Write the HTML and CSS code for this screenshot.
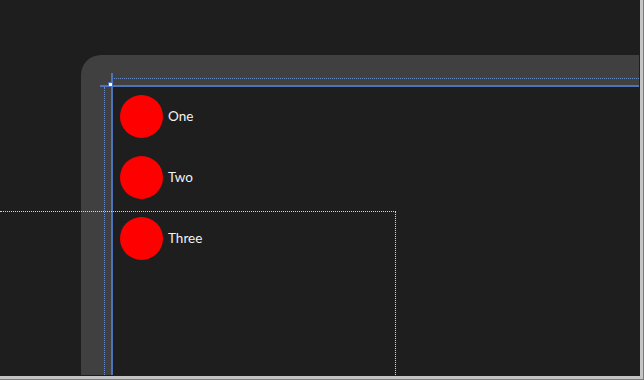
FILE: index.html
```html
<!doctype html>
<html lang="en">
  <head>
    <meta charset="UTF-8" />
    <title>Designer</title>
    <link rel="stylesheet" href="styles.css">
  </head>
  <body>
    <div class="screen">
      <div class="panel">
        <div class="guide guide-h-dotted"></div>
        <div class="guide guide-v-dotted"></div>
        <div class="guide guide-h"></div>
        <div class="guide guide-v"></div>
        <div class="handle"></div>

        <div class="canvas">
          <div class="item">
            <div class="dot"></div>
            <span class="label">One</span>
          </div>
          <div class="item">
            <div class="dot"></div>
            <span class="label">Two</span>
          </div>
          <div class="item">
            <div class="dot"></div>
            <span class="label">Three</span>
          </div>
        </div>
      </div>

      <div class="marquee"></div>
    </div>
  </body>
</html>
```

FILE: styles.css
```css
:root {
  --bg-color: #1e1e1e;
  --panel-color: #404040;
  --guide-color: #4f73b8;
  --guide-dotted: #6d8cc6;
  --text-color: #f2f2f2;
}

* {
  margin: 0;
  padding: 0;
  box-sizing: border-box;
}

body {
  background-color: var(--bg-color);
  font-family: Lato, 'Noto Sans', sans-serif;
  overflow: hidden;
}

.screen {
  position: relative;
  width: 644px;
  height: 380px;
  padding: 55px 4px 4px 81px;
  display: flex;
  border-right: 1px solid #7a7a7a;
  border-bottom: 1px solid #7a7a7a;
  box-shadow: inset -3px -3px 0 #c4c4c4;
}

.panel {
  position: relative;
  flex: 1;
  display: flex;
  padding: 31px 0 0 31px;
  background-color: var(--panel-color);
  border-radius: 20px 0 0 0;
}

.canvas {
  flex: 1;
  display: flex;
  flex-direction: column;
  gap: 18px;
  padding: 9px 0 0 8px;
  background-color: var(--bg-color);
}

.item {
  display: flex;
  align-items: center;
  gap: 5px;
}

.dot {
  width: 43px;
  height: 43px;
  border-radius: 50%;
  background-color: #ff0000;
}

.label {
  font-size: 13.5px;
  color: var(--text-color);
  padding-bottom: 1px;
}

.guide {
  position: absolute;
}

.guide-h {
  top: 30px;
  left: 19px;
  right: 0;
  height: 2px;
  background-color: var(--guide-color);
}

.guide-v {
  top: 18px;
  bottom: 0;
  left: 30px;
  width: 2px;
  background-color: var(--guide-color);
}

.guide-h-dotted {
  top: 23px;
  left: 31px;
  right: 0;
  border-top: 1px dotted var(--guide-dotted);
}

.guide-v-dotted {
  top: 32px;
  bottom: 0;
  left: 23px;
  border-left: 1px dotted var(--guide-dotted);
}

.handle {
  position: absolute;
  top: 27px;
  left: 27px;
  width: 5px;
  height: 5px;
  background-color: #ffffff;
  border: 1px solid var(--guide-color);
}

.marquee {
  position: absolute;
  top: 211px;
  left: 0;
  width: 396px;
  bottom: 4px;
  border-top: 1px dotted #d8d8d8;
  border-right: 1px dotted #d8d8d8;
}
```
